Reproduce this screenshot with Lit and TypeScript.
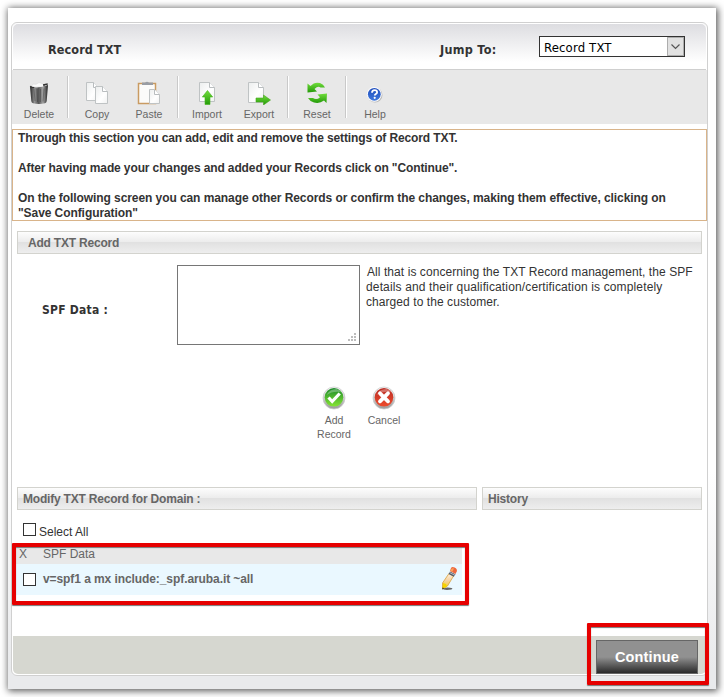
import { LitElement, html, css, svg } from "lit";
import { customElement, property } from "lit/decorators.js";

const page = (x: number, y: number, w: number, h: number) => svg`
  <path d="M${x + 0.5} ${y + 0.5}h${w - 6}l5 5v${h - 6}h-${w - 1}z" fill="url(#paper)" stroke="#bfc3c4"></path>
  <path d="M${x + w - 5.5} ${y + 0.5}v5h5" fill="#fff" stroke="#b9bdbf"></path>`;

const paper = svg`<linearGradient id="paper" x1="0" y1="0" x2="1" y2="1">
  <stop offset="0" stop-color="#eceeee"></stop><stop offset=".6" stop-color="#ffffff"></stop>
  <stop offset="1" stop-color="#f0f1f1"></stop></linearGradient>`;

const green = svg`<linearGradient id="green" x1="0" y1="0" x2="0" y2="1">
  <stop offset="0" stop-color="#72dd3c"></stop><stop offset="1" stop-color="#239a08"></stop></linearGradient>`;

const icons: Record<string, unknown> = {
  trash: svg`<defs><linearGradient id="bin"><stop offset="0" stop-color="#222"></stop>
      <stop offset=".25" stop-color="#909090"></stop><stop offset=".48" stop-color="#555"></stop>
      <stop offset=".72" stop-color="#a5a5a5"></stop><stop offset="1" stop-color="#1d1d1d"></stop></linearGradient></defs>
    <path d="M4 6l2-3 3 .3L12 1.500l4.500 1.500 2.500 3z" fill="#fafafa" stroke="#d5d5d5" stroke-width=".5"></path>
    <path d="M3 5.500q9 2.500 18-1.500l-1.300 16q-.2 1.800-1.700 2.200-6 1.500-12 0-1.500-.4-1.700-2.200z" fill="url(#bin)"></path>
    <path d="M7 8l1 12M10 8l.5 13M13.500 8l-.2 13M17 7.500l-1 13" stroke="#333" stroke-width=".6" opacity=".7"></path>
    <path d="M3.300 5q1 1.800 4 1.700M20.700 3l-4 .8.500 1.500" fill="none" stroke="#333" stroke-width="1.300"></path>`,
  copy: svg`<defs>${paper}</defs>${page(1, 1, 13, 19)}${page(10, 5, 13, 18)}`,
  paste: svg`<defs>${paper}</defs>
    <rect x="1.500" y="2.500" width="17" height="20" fill="#fbfbfa" stroke="#c99b62" stroke-width="1.500"></rect>
    <path d="M5 4V1.500h3Q10 0 12 1.500h4V4z" fill="#999da4"></path>${page(12, 8, 11, 15)}`,
  import: svg`<defs>${paper}${green}</defs>${page(4, 1, 16, 20)}
    <path d="M12.500 9.500l5.200 6.500h-2.700v7.500h-5V16H7.300z" fill="url(#green)" stroke="#45b51d" stroke-width=".6"></path>`,
  export: svg`<defs>${paper}${green}</defs>${page(1, 1, 16, 21)}
    <path d="M9 17h7.500v-3l7 5-7 5v-3H9z" fill="url(#green)" stroke="#45a51d" stroke-width=".6"></path>`,
  reset: svg`<defs>${green}</defs>
    <path d="M2.500 2.500L5.500 5Q9.500.5 15 2q3.500 1 5 4.500h-4.500Q13 4.500 9.500 8l2.500 2.500-9.500 1z" fill="url(#green)"></path>
    <path d="M21.500 22L19 19.500q-4.500 3.500-10 2-4-1-6-4.500h5q3.500 2.500 7-.8L12.500 13.500 22 12.500z" fill="url(#green)"></path>`,
  help: svg`<defs><linearGradient id="blue" x1="0" y1="0" x2="0" y2="1"><stop offset="0" stop-color="#1f4dbb"></stop>
      <stop offset="1" stop-color="#3f78dd"></stop></linearGradient></defs>
    <circle cx="12" cy="14" r="7.500" fill="#bbb"></circle>
    <circle cx="11.300" cy="13.300" r="7.400" fill="#fff"></circle><circle cx="11.300" cy="13.300" r="6.400" fill="url(#blue)"></circle>
    <path d="M9 11.700q0-2.600 2.600-2.600 2.500 0 2.500 2.100 0 1-1.300 1.800-1 .6-1 1.600" fill="none" stroke="#fff" stroke-width="1.800"></path>
    <circle cx="11.700" cy="16.800" r="1.100" fill="#fff"></circle>`,
  add: svg`<defs><linearGradient id="ok" x1="0" y1="0" x2="0" y2="1"><stop offset="0" stop-color="#1c8a2b"></stop>
      <stop offset="1" stop-color="#86e534"></stop></linearGradient><linearGradient id="rim" x1="0" y1="0" x2="0" y2="1">
      <stop offset="0" stop-color="#fff"></stop><stop offset="1" stop-color="#999"></stop></linearGradient></defs>
    <circle cx="12" cy="12" r="11" fill="url(#rim)" stroke="#ccc" stroke-width=".8"></circle>
    <circle cx="12" cy="11.300" r="9.300" fill="url(#ok)"></circle>
    <path d="M4.500 9q3-6 10-6 3 .4 5 3-9-1.500-15 3z" fill="#fff" opacity=".3"></path>
    <path d="M6.500 11.500l3.700 4 7.500-8" fill="none" stroke="#fff" stroke-width="3.200"></path>`,
  cancel: svg`<defs><linearGradient id="no" x1="0" y1="0" x2="0" y2="1"><stop offset="0" stop-color="#b92d25"></stop>
      <stop offset="1" stop-color="#ee4b2c"></stop></linearGradient><linearGradient id="rim" x1="0" y1="0" x2="0" y2="1">
      <stop offset="0" stop-color="#fff"></stop><stop offset="1" stop-color="#999"></stop></linearGradient></defs>
    <circle cx="12" cy="12" r="11" fill="url(#rim)" stroke="#ccc" stroke-width=".8"></circle>
    <circle cx="12" cy="11.300" r="9.300" fill="url(#no)"></circle>
    <path d="M4.500 9q3-6 10-6 3 .4 5 3-9-1.500-15 3z" fill="#fff" opacity=".3"></path>
    <path d="M8 7.300l8 8M16 7.300l-8 8" stroke="#fff" stroke-width="3.800" stroke-linecap="round"></path>`,
  pencil: svg`<defs><linearGradient id="wood" x1="0" y1="0" x2="0" y2="1"><stop offset="0" stop-color="#fff0dc"></stop>
      <stop offset=".45" stop-color="#f6d2a2"></stop><stop offset="1" stop-color="#f5cd0c"></stop></linearGradient></defs>
    <path d="M6 22.500q4-2 9.500-.2l-1 1.200q-5 .8-8 0z" fill="#666"></path>
    <path d="M12 7.500l4.500 2.500-6 10-5 3V17z" fill="url(#wood)" stroke="#dba03a" stroke-width=".8"></path>
    <path d="M6 17l3 1 1 2.500L5.500 23z" fill="#f5d400"></path>
    <path d="M5.500 21.500l2 .8-2.300 1.200z" fill="#333"></path>
    <path d="M13 5.500l5.500 2.700-1.700 2.600-5.300-2.800z" fill="#555d68"></path>
    <path d="M12.500 6.500l5.500 2.800" stroke="#c9ced4" stroke-width=".8"></path>
    <path d="M14 2q1-1.700 3.600-.5 3 1.400 2.200 3.800L18.500 8 13 5z" fill="#ee673d"></path>
    <path d="M14.500 2.800q1-1 2.500-.3l-1.700 3.300-2-1z" fill="#f9a45c"></path>`,
};

@customElement("app-icon")
class AppIcon extends LitElement {
  @property() name = "";
  static styles = css`
    :host { display: block; width: 24px; height: 24px; flex: none; }
    svg { display: block; width: 100%; height: 100%; }
  `;
  render() {
    return html`<svg viewBox="0 0 24 24">${icons[this.name]}</svg>`;
  }
}

@customElement("tool-button")
class ToolButton extends LitElement {
  @property() icon = "";
  @property() label = "";
  static styles = css`
    :host {
      display: flex; flex-direction: column; align-items: center; gap: var(--gap, 3px);
      font: 10.5px/14px "Liberation Sans", Arial, sans-serif; color: #666; text-align: center;
    }
  `;
  render() {
    return html`<app-icon name=${this.icon}></app-icon><span>${this.label}</span>`;
  }
}

const toolGroups = [
  [["trash", "Delete"]],
  [["copy", "Copy"], ["paste", "Paste"]],
  [["import", "Import"], ["export", "Export"]],
  [["reset", "Reset"]],
  [["help", "Help"]],
];

@customElement("app-root")
class AppRoot extends LitElement {
  static styles = css`
    :host {
      display: block; box-sizing: border-box; width: 724px; height: 697px; padding: 8px; overflow: hidden;
      background: #fff; color: #333; font: 12px/15px "Liberation Sans", Arial, sans-serif;
    }
    * { box-sizing: border-box; }
    .sheet {
      width: 708px; height: 681px; padding: 14px 8px 13px 3px;
      background: linear-gradient(#fff 68%, #e9eaec 97%);
      box-shadow: 1px 1px 7px 1px rgba(0, 0, 0, .65);
    }
    .panel {
      position: relative; display: flex; flex-direction: column; width: 697px; height: 654px; background: #fff;
      border: 1px solid #d0d0d0; border-radius: 6px;
    }
    .header {
      flex: none; display: flex; height: 47px; margin: 0 1px; padding: 12px 21px 0 35px;
      border-bottom: 1px solid #cfcfcf; border-radius: 5px 5px 0 0; box-shadow: inset 0 1px #fff;
      background: linear-gradient(#dcdce0, #fff 85%);
    }
    .heading { font: bold 12.5px/30px "DejaVu Sans Condensed", "DejaVu Sans", sans-serif; font-stretch: condensed; letter-spacing: .12px; flex: 1; }
    .jump { flex: none; width: 99px; letter-spacing: .3px; }
    .select {
      display: flex; width: 146px; height: 21px; margin-top: 1px; border: 1px solid #333; background: #fff; color: #000;
      font: 13px/21px "DejaVu Sans Condensed", "DejaVu Sans", sans-serif; font-stretch: condensed; letter-spacing: .15px; padding-left: 4px;
    }
    .select span { flex: 1; }
    .arrow { width: 17px; height: 19px; background: #e1e1e1; border: 1px solid #adadad; }
    .arrow svg { display: block; }
    .toolbar { --gap: 2px; flex: none; display: flex; height: 54px; padding: 11px 1px 0; background: #e8e8e8; }
    .toolbar tool-button { width: 52px; }
    .rule { width: 2px; height: 42px; margin: -5px 2px 0; background: linear-gradient(90deg, #c9c9c9 50%, #fff 50%); }
    .notice { flex: none; height: 92px; margin-top: 5px; padding: 1px 0 0 5px; border: 1px solid #d9b48a; font-weight: bold; letter-spacing: -.12px; white-space: nowrap; }
    .notice p { margin: 0 0 15px; }
    .notice .long { letter-spacing: -.075px; }
    .bar {
      height: 23px; padding-left: 5px; border: 1px solid #d3d3ce; color: #666; font-weight: bold; line-height: 23px;
      letter-spacing: -.2px; background: linear-gradient(#fdfdfd, #ececec 48%, #e1e1e1 50%, #eee);
    }
    .bar.add { flex: none; margin: 10px 5px 0; padding-left: 10px; }
    .form { flex: none; display: flex; height: 91px; padding: 11px 5px 0 30px; }
    .label { width: 135px; padding-top: 38px; font: bold 12px/15px "DejaVu Sans Condensed", "DejaVu Sans", sans-serif; font-stretch: condensed; letter-spacing: .25px; }
    .area { display: flex; align-items: flex-end; justify-content: flex-end; width: 183px; height: 80px; padding: 2px; border: 1px solid #767676; }
    .hint { width: 330px; text-indent: 1px; margin-left: 6px; letter-spacing: .07px; }
    .hint em { font-style: normal; letter-spacing: .14px; }
    .actions { flex: none; display: flex; height: 142px; padding: 41px 0 0 297px; }
    .actions tool-button { width: 50px; padding: 0 7px; }
    .bars { flex: none; display: grid; grid-template-columns: 460px 220px; gap: 5px; padding: 0 5px; }
    .all { display: flex; gap: 3px; height: 37px; padding: 13px 0 0 11px; }
    .all span { padding-top: 2px; }
    .check { flex: none; width: 13px; height: 13px; border: 1px solid #333; background: #fff; }
    .records { position: relative; flex: none; width: 450px; padding-left: 4px; color: #666; }
    .thead { display: flex; height: 17px; padding-left: 3px; background: #e8e8e8; line-height: 14px; }
    .thead span:first-child { width: 24px; }
    .row { display: flex; align-items: center; height: 31px; padding: 0 1px 0 7px; background: #eaf8ff; font-weight: bold; }
    .row span { flex: 1; padding-left: 7px; letter-spacing: -.08px; }
    .row app-icon { margin-bottom: 3px; }
    .mark { position: absolute; border: 4px solid #e60000; border-radius: 1px; box-shadow: 0 1px 1px #777, inset 0 1px 1px #777; }
    .records .mark { left: 0; top: -4px; width: 457px; height: 62px; }
    .footer { flex: none; display: flex; justify-content: flex-end; height: 38px; margin: auto 1px 1px; padding: 4px 8px 0 0; background: #d6d7d0; border-radius: 0 0 5px 5px; }
    .button {
      position: relative; width: 102px; height: 34px; border: 1px solid #666; color: #fff; text-align: center;
      font: bold 14.500px/33px "Liberation Sans", Arial, sans-serif; letter-spacing: .15px;
      background: linear-gradient(#919191 50%, #2a2a2a);
    }
    .button .mark { left: -10px; top: -18px; width: 122px; height: 62px; }
  `;

  render() {
    return html`
      <div class="sheet">
        <div class="panel">
          <div class="header">
            <div class="heading">Record TXT</div>
            <div class="heading jump">Jump To:</div>
            <div class="select"><span>Record TXT</span>
              <div class="arrow"><svg width="15" height="17"><path d="M3.500 6.500l4 4 4-4" fill="none" stroke="#555" stroke-width="1.200"></path></svg></div>
            </div>
          </div>
          <div class="toolbar">
            ${toolGroups.map((group, i) => html`
              ${i ? html`<div class="rule"></div>` : ""}
              ${group.map(([icon, label]) => html`<tool-button icon=${icon} label=${label}></tool-button>`)}`)}
          </div>
          <div class="notice">
            <p>Through this section you can add, edit and remove the settings of Record TXT.</p>
            <p>After having made your changes and added your Records click on "Continue".</p>
            <p class="long">On the following screen you can manage other Records or confirm the changes, making them effective, clicking on<br>"Save Configuration"</p>
          </div>
          <div class="bar add">Add TXT Record</div>
          <div class="form">
            <div class="label">SPF Data :</div>
            <div class="area"><svg width="9" height="9" fill="#bdbdbd" shape-rendering="crispEdges"><path d="M6 0h2v2h-2zM3 3h2v2h-2zM6 3h2v2h-2zM0 6h2v2h-2zM3 6h2v2h-2zM6 6h2v2h-2z"></path></svg></div>
            <div class="hint">All that is concerning the TXT Record management, the SPF <em>details and their qualification/certification is completely</em> charged to the customer.</div>
          </div>
          <div class="actions">
            <tool-button icon="add" label="Add Record"></tool-button>
            <tool-button icon="cancel" label="Cancel"></tool-button>
          </div>
          <div class="bars"><div class="bar">Modify TXT Record for Domain :</div><div class="bar">History</div></div>
          <div class="all"><div class="check"></div><span>Select All</span></div>
          <div class="records">
            <div class="thead"><span>X</span><span>SPF Data</span></div>
            <div class="row"><div class="check"></div><span>v=spf1 a mx include:_spf.aruba.it ~all</span><app-icon name="pencil"></app-icon></div>
            <div class="mark"></div>
          </div>
          <div class="footer"><div class="button">Continue<div class="mark"></div></div></div>
        </div>
      </div>`;
  }
}
